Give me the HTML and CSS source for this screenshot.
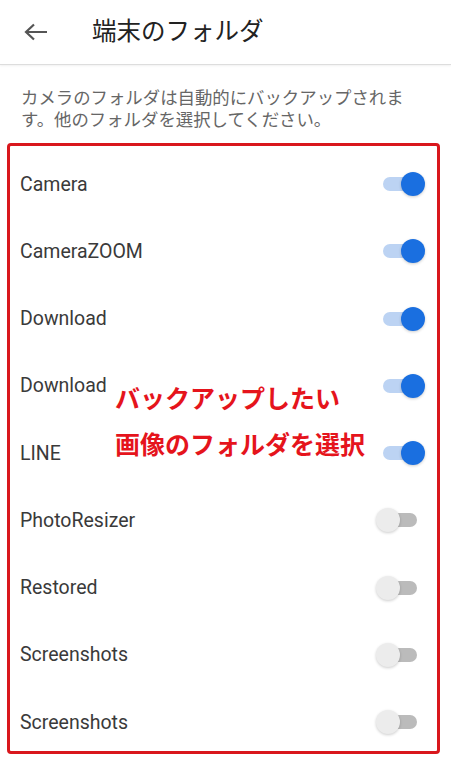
FILE: index.html
```html
<!DOCTYPE html>
<html>
<head>
    <title>端末のフォルダ</title>
    <link rel="stylesheet" href="styles.css">
</head>
<body>
    <div class="header">
        <svg class="back" width="26" height="20" viewBox="0 0 26 20">
            <path d="M24 10H3M11 2.5L3 10l8 7.5" fill="none" stroke="#555" stroke-width="2.2"/>
        </svg>
        <h1>端末のフォルダ</h1>
    </div>
    <p class="intro">カメラのフォルダは自動的にバックアップされます。他のフォルダを選択してください。</p>
    <ul class="folder-list">
        <li class="folder"><span>Camera</span><span class="switch on"></span></li>
        <li class="folder"><span>CameraZOOM</span><span class="switch on"></span></li>
        <li class="folder"><span>Download</span><span class="switch on"></span></li>
        <li class="folder"><span>Download</span><span class="switch on"></span></li>
        <li class="folder"><span>LINE</span><span class="switch on"></span></li>
        <li class="folder"><span>PhotoResizer</span><span class="switch"></span></li>
        <li class="folder"><span>Restored</span><span class="switch"></span></li>
        <li class="folder"><span>Screenshots</span><span class="switch"></span></li>
        <li class="folder"><span>Screenshots</span><span class="switch"></span></li>
        <li class="note">バックアップしたい<br>画像のフォルダを選択</li>
    </ul>
</body>
</html>
```

FILE: styles.css
```css
body {
    font-family: Roboto, "Noto Sans CJK JP", sans-serif;
    background-color: #fff;
    margin: 0;
    padding: 0;
    width: 451px;
}
.header {
    height: 64px;
    display: flex;
    align-items: center;
    border-bottom: 1px solid #ddd;
    box-shadow: 0 1px 2px rgba(0, 0, 0, 0.06);
}
.back {
    margin: 0 0 0 23px;
}
h1 {
    margin: 0 0 3px 43px;
    font-size: 24.5px;
    font-weight: normal;
    color: #222;
    font-family: "Noto Sans CJK JP", sans-serif;
    line-height: 1;
}
.intro {
    margin: 21px 20px 0 21px;
    font-family: "Noto Sans CJK JP", sans-serif;
    font-size: 17.4px;
    line-height: 21.5px;
    color: #666;
    height: 57px;
}
.folder-list {
    position: relative;
    list-style: none;
    margin: 0 11px 0 7px;
    padding: 0;
    border: 3px solid #d9171d;
    border-radius: 4px;
}
.folder {
    height: 67.25px;
    box-sizing: border-box;
    padding: 9px 20px 0 10px;
    display: flex;
    align-items: center;
    justify-content: space-between;
    font-size: 19.5px;
    color: #3a3a3a;
}
.switch {
    position: relative;
    width: 34px;
    height: 14px;
    border-radius: 7px;
    background-color: #bbb;
}
.switch::after {
    content: "";
    position: absolute;
    left: -7px;
    top: -5px;
    width: 24px;
    height: 24px;
    border-radius: 50%;
    background-color: #ececec;
    box-shadow: 0 1px 3px rgba(0, 0, 0, 0.2);
}
.switch.on {
    background-color: #bcd3f3;
}
.switch.on::after {
    left: 18px;
    background-color: #1a6fe0;
}
.note {
    position: absolute;
    left: 105px;
    top: 228px;
    font-family: "Noto Sans CJK JP", sans-serif;
    font-size: 25px;
    font-weight: bold;
    line-height: 46px;
    color: #e5141c;
    white-space: nowrap;
}
```
